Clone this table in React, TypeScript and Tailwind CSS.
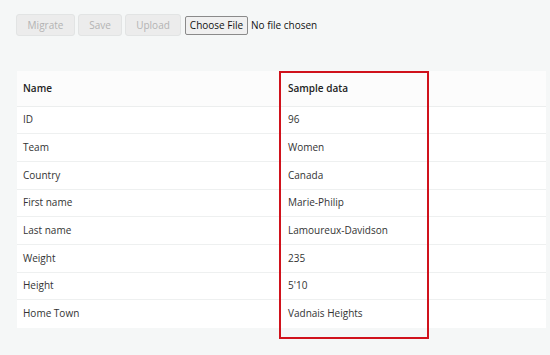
import React from 'react'

const rows: [string, string][] = [
  ['ID', '96'],
  ['Team', 'Women'],
  ['Country', 'Canada'],
  ['First name', 'Marie-Philip'],
  ['Last name', 'Lamoureux-Davidson'],
  ['Weight', '235'],
  ['Height', "5'10"],
  ['Home Town', 'Vadnais Heights'],
]

const DisabledButton = ({ label, width }: { label: string; width: string }) => (
  <button
    disabled
    className={`h-[22px] ${width} rounded-[3px] border border-[#e2e4e4] bg-[#ececec] text-[10px] text-[#b3b3b3]`}
  >
    {label}
  </button>
)

export default function App() {
  return (
    <div
      className="relative h-[355px] w-[550px] overflow-hidden bg-[#f5f7f7] pl-[16px] pt-[14px]"
      style={{ fontFamily: '"Open Sans", "Noto Sans", sans-serif' }}
    >
      <div className="flex items-center gap-[3px]">
        <DisabledButton label="Migrate" width="w-[59px]" />
        <DisabledButton label="Save" width="w-[44px]" />
        <DisabledButton label="Upload" width="w-[56px]" />
        <input
          type="file"
          className="ml-[1px] text-[10px] text-[#111] file:mr-[3px] file:h-[19px] file:w-[63px] file:rounded-[2px] file:border file:border-[#8a8a8a] file:bg-[#f0f0f0] file:text-[10px] file:text-[#111]"
        />
      </div>

      <table className="mt-[35px] ml-[1px] w-[529px] border-collapse bg-white text-[10px] text-[#333]">
        <thead>
          <tr className="h-[35px] border-b border-[#eceeee] bg-[#fcfcfc] text-left">
            <th className="w-[262px] pl-[6px] font-semibold text-[#222]">Name</th>
            <th className="pl-[9px] font-semibold text-[#222]">Sample data</th>
          </tr>
        </thead>
        <tbody>
          {rows.map(([name, value], i) => (
            <tr
              key={name}
              className={`h-[27.7px] ${i < rows.length - 1 ? 'border-b border-[#eef0f0]' : ''}`}
            >
              <td className="pl-[6px]">{name}</td>
              <td className="pl-[9px]">{value}</td>
            </tr>
          ))}
        </tbody>
      </table>

      {/* highlight box over the sample column */}
      <div className="absolute left-[279px] top-[71px] h-[268px] w-[150px] border-2 border-[#d0121c]" />
    </div>
  )
}
